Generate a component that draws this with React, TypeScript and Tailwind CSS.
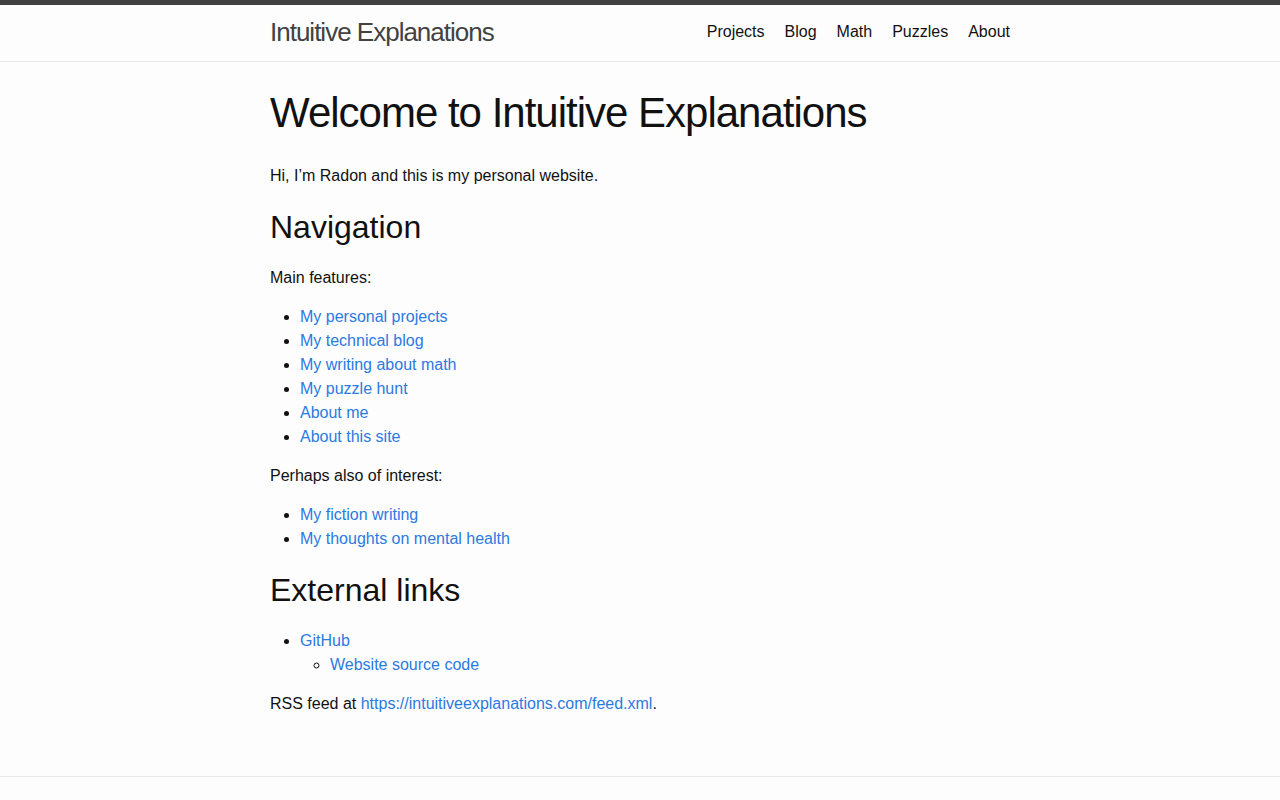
import React from "react";

const linkCls = "text-[#2a7ae2] no-underline";

export default function App() {
  return (
    <div
      className="min-h-screen bg-[#fdfdfd] text-[#111] text-[16px] leading-[1.5]"
      style={{ fontFamily: '"Liberation Sans", Arial, Helvetica, sans-serif' }}
    >
      <header className="border-t-[5px] border-t-[#424242] border-b border-b-[#e8e8e8] min-h-[56px]">
        <div className="max-w-[740px] mx-auto flex items-start justify-between h-[56px]">
          <a className="text-[26px] font-light leading-[54px] tracking-[-1px] text-[#424242]" href="#">
            Intuitive Explanations
          </a>
          <nav className="leading-[54px]">
            <a className="text-[#111] leading-[1.5] mr-5" href="#">Projects</a>
            <a className="text-[#111] leading-[1.5] mr-5" href="#">Blog</a>
            <a className="text-[#111] leading-[1.5] mr-5" href="#">Math</a>
            <a className="text-[#111] leading-[1.5] mr-5" href="#">Puzzles</a>
            <a className="text-[#111] leading-[1.5]" href="#">About</a>
          </nav>
        </div>
      </header>
      <main className="py-[30px]">
        <div className="max-w-[740px] mx-auto">
          <h1 className="text-[42px] leading-none tracking-[-1px] font-normal mb-[30px]">
            Welcome to Intuitive Explanations
          </h1>
          <div className="pb-[30px]">
            <p className="mb-[15px]">Hi, I’m Radon and this is my personal website.</p>
            <h2 className="text-[32px] leading-[1.5] font-normal mb-[15px]">Navigation</h2>
            <p className="mb-[15px]">Main features:</p>
            <ul className="list-disc ml-[30px] mb-[15px]">
              <li><a className={linkCls} href="#">My personal projects</a></li>
              <li><a className={linkCls} href="#">My technical blog</a></li>
              <li><a className={linkCls} href="#">My writing about math</a></li>
              <li><a className={linkCls} href="#">My puzzle hunt</a></li>
              <li><a className={linkCls} href="#">About me</a></li>
              <li><a className={linkCls} href="#">About this site</a></li>
            </ul>
            <p className="mb-[15px]">Perhaps also of interest:</p>
            <ul className="list-disc ml-[30px] mb-[15px]">
              <li><a className={linkCls} href="#">My fiction writing</a></li>
              <li><a className={linkCls} href="#">My thoughts on mental health</a></li>
            </ul>
            <h2 className="text-[32px] leading-[1.5] font-normal mb-[15px]">External links</h2>
            <ul className="list-disc ml-[30px] mb-[15px]">
              <li>
                <a className={linkCls} href="#">GitHub</a>
                <ul className="list-[circle] ml-[30px]">
                  <li><a className={linkCls} href="#">Website source code</a></li>
                </ul>
              </li>
            </ul>
            <p>
              RSS feed at <a className={linkCls} href="#">https://intuitiveexplanations.com/feed.xml</a>.
            </p>
          </div>
        </div>
      </main>
      <footer className="border-t border-t-[#e8e8e8] py-[30px]" />
    </div>
  );
}
